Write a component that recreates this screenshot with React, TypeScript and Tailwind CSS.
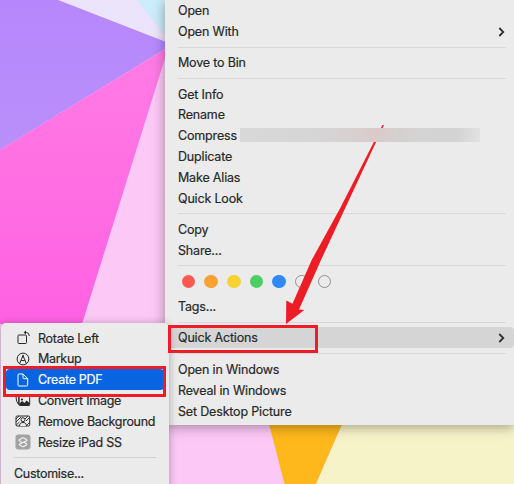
import type { ReactNode } from 'react';
import clsx from 'clsx';

const TAG_COLORS = ['bg-[#fb5a52]', 'bg-[#f9a132]', 'bg-[#f8d133]', 'bg-[#4bcf62]', 'bg-[#2f8af7]'];

function Wallpaper() {
    return (
        <svg className="absolute inset-0" width="514" height="484" viewBox="0 0 514 484">
            <defs>
                <linearGradient id="violet" x1="0" y1="0" x2="0" y2="1">
                    <stop offset="0" stopColor="#b687fc" />
                    <stop offset="1" stopColor="#b98ffa" />
                </linearGradient>
                <linearGradient id="magenta" x1="0" y1="0" x2="0" y2="1">
                    <stop offset="0" stopColor="#ff7ce4" />
                    <stop offset="1" stopColor="#ff61e2" />
                </linearGradient>
            </defs>
            <rect width="514" height="484" fill="#fcc8f6" />
            <path d="M58 0H137L170 41V44Z" fill="#ece4fb" />
            <path d="M137 0H170V41Z" fill="#ccedfb" />
            <path d="M0 0H58L170 43.5V46L0 150Z" fill="url(#violet)" />
            <path d="M0 150L168.500 47L82 324H0Z" fill="url(#magenta)" />
            <path d="M268 420H344L316 484H284.500Z" fill="#feb81b" />
            <path d="M344 420H514V484H316Z" fill="#f7f3c9" />
        </svg>
    );
}

function Chevron() {
    return (
        <svg className="ml-auto" width="7" height="10" viewBox="0 0 7 10" fill="none">
            <path d="M1.300 1L5.300 5L1.300 9" stroke="#303030" strokeWidth="1.800" />
        </svg>
    );
}

function Separator() {
    return (
        <div className="flex h-[10.4px] items-center pl-[13px] pr-2">
            <div className="h-px w-full bg-[#d8d8d8]" />
        </div>
    );
}

interface MenuItemProps {
    label: string;
    submenu?: boolean;
    active?: boolean;
}

function MenuItem({ label, submenu, active }: MenuItemProps) {
    return (
        <div
            className={clsx(
                'flex h-[20.8px] shrink-0 items-center whitespace-nowrap pl-[13px] pr-[9px]',
                active && 'rounded-[4px] bg-[#d5d5d5]',
            )}
        >
            <span className="pt-[1.5px]">{label}</span>
            {submenu && <Chevron />}
        </div>
    );
}

function TagRow() {
    return (
        <div className="flex h-[25.3px] items-center gap-[9px] pb-1 pl-[16.500px]">
            {TAG_COLORS.map((color) => (
                <div key={color} className={clsx('size-[13.7px] rounded-full', color)} />
            ))}
            <div className="size-[13.7px] rounded-full border border-[#8f8f8f]" />
            <div className="size-[13.7px] rounded-full border border-[#8f8f8f]" />
        </div>
    );
}

function ContextMenu() {
    return (
        <div className="absolute left-[165px] top-0 h-[425px] w-[349px] bg-[#ebebeb] pt-[0.6px] tracking-[-0.17px] shadow-[0_2px_12px_rgba(0,0,0,0.36)]">
            <MenuItem label="Open" />
            <MenuItem label="Open With" submenu />
            <Separator />
            <MenuItem label="Move to Bin" />
            <Separator />
            <MenuItem label="Get Info" />
            <MenuItem label="Rename" />
            <MenuItem label="Compress" />
            <MenuItem label="Duplicate" />
            <MenuItem label="Make Alias" />
            <MenuItem label="Quick Look" />
            <Separator />
            <MenuItem label="Copy" />
            <MenuItem label="Share..." />
            <Separator />
            <TagRow />
            <MenuItem label="Tags..." />
            <Separator />
            <MenuItem label="Quick Actions" submenu active />
            <Separator />
            <div className="pt-[0.6px]">
                <MenuItem label="Open in Windows" />
                <MenuItem label="Reveal in Windows" />
                <MenuItem label="Set Desktop Picture" />
            </div>
        </div>
    );
}

function RotateIcon() {
    return (
        <svg width="16" height="16" viewBox="0 0 16 16" fill="none" stroke="currentColor">
            <rect x="3" y="5" width="8.500" height="8.500" rx="0.800" />
            <path d="M9.500 2.500H11.500Q14.300 2.700 14.300 6" />
            <path d="M11 0.500L8.700 2.500L11 4.500Z" fill="currentColor" stroke="none" />
        </svg>
    );
}

function MarkupIcon() {
    return (
        <svg width="16" height="16" viewBox="0 0 16 16" fill="none" stroke="currentColor">
            <circle cx="8" cy="8" r="5.900" />
            <path d="M4.700 12.500L8 4.500L11.300 12.500M6.200 9.500H9.800" />
            <path d="M8 3.300L6.900 6.600H9.100Z" fill="currentColor" stroke="none" />
        </svg>
    );
}

function DocumentIcon() {
    return (
        <svg width="16" height="16" viewBox="0 0 16 16" fill="none" stroke="currentColor" strokeLinejoin="round">
            <path d="M3 3Q3 2 4 2H8L12.700 6.700V13Q12.700 14 11.700 14H4Q3 14 3 13Z" />
            <path d="M8 2V5.700Q8 6.700 9 6.700H12.700" />
        </svg>
    );
}

function ConvertIcon() {
    return (
        <svg width="16" height="16" viewBox="0 0 16 16" fill="none" stroke="currentColor">
            <path d="M1 3Q1.300 9.500 3.800 11.500V3" />
            <rect x="4" y="3.500" width="10.700" height="9" rx="1" />
            <path d="M4.500 10.500L7 8L9.500 10L11.500 7.500L14.500 10V12.500H4.500Z" fill="currentColor" stroke="none" />
            <circle cx="7" cy="6.500" r="1.100" fill="currentColor" stroke="none" />
        </svg>
    );
}

function RemoveBackgroundIcon() {
    return (
        <svg width="16" height="16" viewBox="0 0 16 16" fill="none" stroke="currentColor">
            <rect x="1" y="3" width="13.700" height="10" rx="1.200" />
            <path d="M1 6L4 3M1 9L6 4M1.300 12L4.500 9M4 13L5.500 11.500M8 13L9 12M11 13L14.500 9.500M11 8L14.500 4.500M10 6L13 3" strokeWidth="0.900" />
            <circle cx="8" cy="6.700" r="2" fill="#ebebeb" />
            <path d="M4.500 13C4.700 10.500 6 9.500 8 9.500S11.300 10.500 11.500 13" fill="#ebebeb" />
        </svg>
    );
}

function ShortcutIcon() {
    return (
        <svg width="16" height="16" viewBox="0 0 16 16" fill="none">
            <rect x="0.500" y="0.500" width="15" height="15" rx="3.200" fill="#a2a2a2" />
            <path
                d="M7.200 8.700L4.300 6.800Q3.700 6.300 4.300 5.800L7.300 3.900Q8 3.500 8.700 3.900L11.700 5.800Q12.300 6.300 11.700 6.800L4.700 10Q4 10.500 4.700 11L7.300 12.400Q8 12.800 8.700 12.400L11.600 10.700Q12.100 10.200 11.600 9.700L8.500 8"
                stroke="#f0f0f0"
                strokeWidth="1.200"
            />
        </svg>
    );
}

interface ActionItemProps {
    label: string;
    icon: ReactNode;
    active?: boolean;
}

function ActionItem({ label, icon, active }: ActionItemProps) {
    return (
        <div
            className={clsx(
                'mx-[5px] flex h-[20.8px] items-center gap-[7.500px] whitespace-nowrap pl-[8.500px]',
                active && 'rounded-[4px] bg-[#0864e1] text-white',
            )}
        >
            {icon}
            <span className="pt-[1.5px]">{label}</span>
        </div>
    );
}

function QuickActionsMenu() {
    return (
        <div className="absolute left-px top-[323px] h-[175px] w-[168px] rounded-[5px] bg-[#ebebeb] pt-[4.8px] tracking-[-0.28px] shadow-[0_1px_8px_rgba(0,0,0,0.3)]">
            <ActionItem label="Rotate Left" icon={<RotateIcon />} />
            <ActionItem label="Markup" icon={<MarkupIcon />} />
            <ActionItem label="Create PDF" icon={<DocumentIcon />} active />
            <ActionItem label="Convert Image" icon={<ConvertIcon />} />
            <ActionItem label="Remove Background" icon={<RemoveBackgroundIcon />} />
            <ActionItem label="Resize iPad SS" icon={<ShortcutIcon />} />
            <div className="flex h-[10.4px] items-center pl-[13px] pr-[13px]">
                <div className="h-px w-full bg-[#d3d3d3]" />
            </div>
            <div className="flex h-[20.8px] items-center pl-[13px] pt-px">Customise...</div>
        </div>
    );
}

function Annotations() {
    return (
        <>
            <svg className="absolute inset-0" width="514" height="484" viewBox="0 0 514 484">
                <path d="M382.500 125H384L321 260L299 309.500L304.300 310L286 324L286.300 300.500L292.500 303.800L311.700 260L340 208.500Z" fill="#ee1c24" />
            </svg>
            {/* Redacted file name */}
            <div className="absolute left-[240px] top-[128px] h-[14px] w-[240px] bg-[linear-gradient(90deg,#d8d8d8_0%,#d5d5d5_35%,#d8d0d0_48%,#dbc9c9_57%,#d6d0d0_65%,#d4d4d4_75%,#d3d3d3_90%,#e1e1e1_100%)]" />
            <div className="absolute left-[168px] top-[325px] h-[28px] w-[150px] border-[3px] border-[#ee1c24]" />
            <div className="absolute left-[3px] top-[366px] h-[31px] w-[163px] border-[3px] border-[#ee1c24]" />
        </>
    );
}

export default function App() {
    return (
        <div className="relative h-[484px] w-[514px] overflow-hidden font-['Inter',sans-serif] text-[12.5px] leading-none text-[#292929] [-webkit-text-stroke:0.2px]">
            <Wallpaper />
            <ContextMenu />
            <QuickActionsMenu />
            <Annotations />
        </div>
    );
}
